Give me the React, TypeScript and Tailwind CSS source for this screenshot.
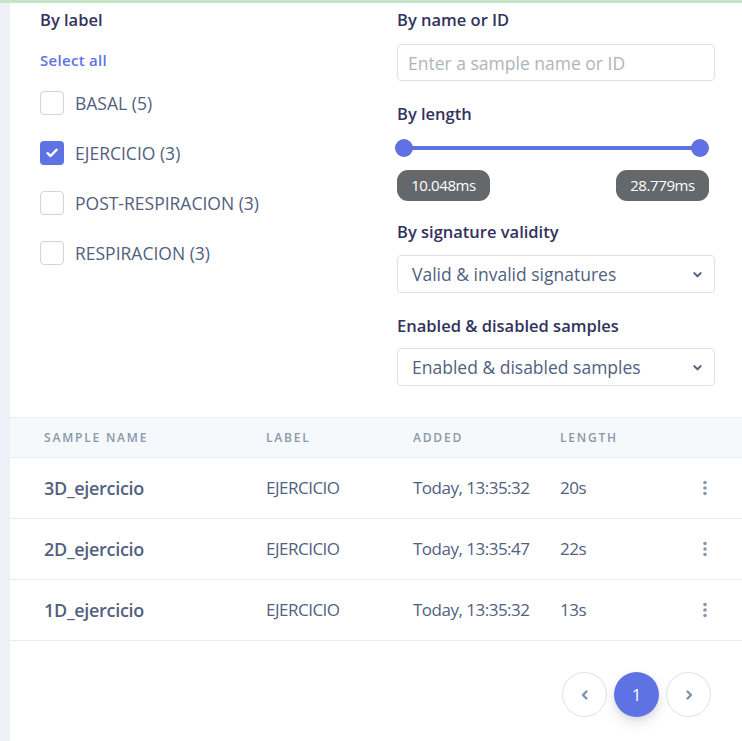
import { useState } from 'react'

const labels = [
  { name: 'BASAL', count: 5, checked: false },
  { name: 'EJERCICIO', count: 3, checked: true },
  { name: 'POST-RESPIRACION', count: 3, checked: false },
  { name: 'RESPIRACION', count: 3, checked: false },
]

const samples = [
  { name: '3D_ejercicio', label: 'EJERCICIO', added: 'Today, 13:35:32', length: '20s' },
  { name: '2D_ejercicio', label: 'EJERCICIO', added: 'Today, 13:35:47', length: '22s' },
  { name: '1D_ejercicio', label: 'EJERCICIO', added: 'Today, 13:35:32', length: '13s' },
]

function Chevron({ dir, size = 12, stroke = 2 }: { dir: 'left' | 'right' | 'down'; size?: number; stroke?: number }) {
  const d = dir === 'left' ? 'M7.5 2.5 L4 6 L7.5 9.5' : dir === 'right' ? 'M4.5 2.5 L8 6 L4.5 9.5' : 'M2.5 4.5 L6 8 L9.5 4.5'
  return (
    <svg width={size} height={size} viewBox="0 0 12 12" fill="none">
      <path d={d} stroke="currentColor" strokeWidth={stroke} strokeLinecap="round" strokeLinejoin="round" />
    </svg>
  )
}

function Kebab() {
  return (
    <svg width="6" height="16" viewBox="0 0 6 16" className="text-[#8898aa]">
      <circle cx="3" cy="2.5" r="1.8" fill="currentColor" />
      <circle cx="3" cy="8" r="1.8" fill="currentColor" />
      <circle cx="3" cy="13.5" r="1.8" fill="currentColor" />
    </svg>
  )
}

function Heading({ children, className = '' }: { children: React.ReactNode; className?: string }) {
  return <div className={'text-[16.5px] font-semibold text-[#32325d] leading-[24px] ' + className}>{children}</div>
}

function SelectBox({ value }: { value: string }) {
  return (
    <div className="flex items-center justify-between h-[38px] border border-[#dee2e6] rounded-[4px] pl-[14px] pr-[11px] text-[17.5px] text-[#525f7f]">
      <span>{value}</span>
      <span className="text-[#525f7f]">
        <Chevron dir="down" size={11} stroke={2.2} />
      </span>
    </div>
  )
}

export default function App() {
  const [checks, setChecks] = useState(labels.map((l) => l.checked))

  return (
    <div className="w-full h-[741px] overflow-hidden bg-white font-['Open_Sans',sans-serif]">
      <div className="h-[3px] bg-[#c6e6c9]" />
      <div className="flex h-[738px]">
        <div className="w-[10px] bg-[#eef0f7]" />
        <div className="flex-1 flex flex-col">
          <div className="flex pl-[30px] pt-[5px] h-[414px]">
            {/* by label */}
            <div className="w-[357px]">
              <Heading>By label</Heading>
              <button className="block mt-[18px] text-[15px] font-semibold text-[#5e72e4] tracking-[0.3px] leading-[20px]">
                Select all
              </button>
              <div className="mt-[21px] flex flex-col gap-[26px]">
                {labels.map((l, i) => (
                  <label key={l.name} className="flex items-center gap-[11px] cursor-pointer">
                    <span
                      onClick={() => setChecks(checks.map((c, j) => (j === i ? !c : c)))}
                      className={
                        checks[i]
                          ? 'w-[24px] h-[24px] rounded-[4px] bg-[#5e72e4] flex items-center justify-center text-white'
                          : 'w-[24px] h-[24px] rounded-[4px] border border-[#ced4da] bg-white'
                      }
                    >
                      {checks[i] && (
                        <svg width="12" height="10" viewBox="0 0 12 10" fill="none">
                          <path d="M1.5 5.2 L4.5 8 L10.5 1.8" stroke="white" strokeWidth="2.4" strokeLinecap="round" strokeLinejoin="round" />
                        </svg>
                      )}
                    </span>
                    <span className="text-[17.5px] text-[#525f7f] leading-[24px]">
                      {l.name} ({l.count})
                    </span>
                  </label>
                ))}
              </div>
            </div>

            {/* right filters */}
            <div className="w-[318px]">
              <Heading>By name or ID</Heading>
              <input
                className="mt-[12px] w-full h-[37px] border border-[#dee2e6] rounded-[4px] px-[10px] text-[17.5px] text-[#525f7f] placeholder-[#adb5bd] outline-none"
                placeholder="Enter a sample name or ID"
              />
              <Heading className="mt-[21px]">By length</Heading>
              <div className="relative mt-[13px] h-[18px] ml-[-2px] mr-[6px]">
                <div className="absolute left-[9px] right-[9px] top-[7px] h-[4px] bg-[#5e72e4] rounded" />
                <div className="absolute left-0 top-0 w-[18px] h-[18px] rounded-full bg-[#5e72e4]" />
                <div className="absolute right-0 top-0 w-[18px] h-[18px] rounded-full bg-[#5e72e4]" />
              </div>
              <div className="mt-[13px] flex justify-between mr-[6px]">
                <span className="h-[31px] w-[93px] justify-center rounded-[11px] bg-[#65686b] text-white text-[15px] flex items-center tracking-[-0.4px]">
                  10.048ms
                </span>
                <span className="h-[31px] w-[93px] justify-center rounded-[11px] bg-[#65686b] text-white text-[15px] flex items-center tracking-[-0.4px]">
                  28.779ms
                </span>
              </div>
              <Heading className="mt-[19px]">By signature validity</Heading>
              <div className="mt-[11px]">
                <SelectBox value="Valid & invalid signatures" />
              </div>
              <Heading className="mt-[21px]">Enabled &amp; disabled samples</Heading>
              <div className="mt-[10px]">
                <SelectBox value="Enabled & disabled samples" />
              </div>
            </div>
          </div>

          {/* table */}
          <div className="border-t border-[#e9ecef]">
            <div className="flex items-center h-[40px] bg-[#f6f9fc] border-b border-[#e9ecef] text-[12px] font-semibold uppercase tracking-[1.8px] text-[#8898aa]">
              <div className="w-[256px] pl-[34px]">Sample name</div>
              <div className="w-[147px]">Label</div>
              <div className="w-[147px]">Added</div>
              <div className="flex-1">Length</div>
            </div>
            {samples.map((s) => (
              <div key={s.name} className="flex items-center h-[61px] border-b border-[#e9ecef] text-[#525f7f]">
                <div className="w-[256px] pl-[34px] text-[18px] font-semibold tracking-[-0.3px]">{s.name}</div>
                <div className="w-[147px] text-[17px] tracking-[-0.5px]">{s.label}</div>
                <div className="w-[147px] text-[17px] tracking-[-0.5px]">{s.added}</div>
                <div className="flex-1 text-[17px] tracking-[-0.5px]">{s.length}</div>
                <div className="w-[40px] pr-[34px] flex justify-end">
                  <Kebab />
                </div>
              </div>
            ))}
          </div>

          {/* pagination */}
          <div className="flex justify-end gap-[7px] pr-[31px] mt-[31px]">
            <button className="w-[45px] h-[45px] rounded-full border border-[#dee2e6] flex items-center justify-center text-[#7f93a8]">
              <Chevron dir="left" size={12} stroke={2.4} />
            </button>
            <button className="w-[45px] h-[45px] rounded-full bg-[#5e72e4] text-white text-[17px] flex items-center justify-center shadow-[0_7px_14px_rgba(50,50,93,0.1),0_3px_6px_rgba(0,0,0,0.08)]">
              1
            </button>
            <button className="w-[45px] h-[45px] rounded-full border border-[#dee2e6] flex items-center justify-center text-[#7f93a8]">
              <Chevron dir="right" size={12} stroke={2.4} />
            </button>
          </div>
        </div>
      </div>
    </div>
  )
}
